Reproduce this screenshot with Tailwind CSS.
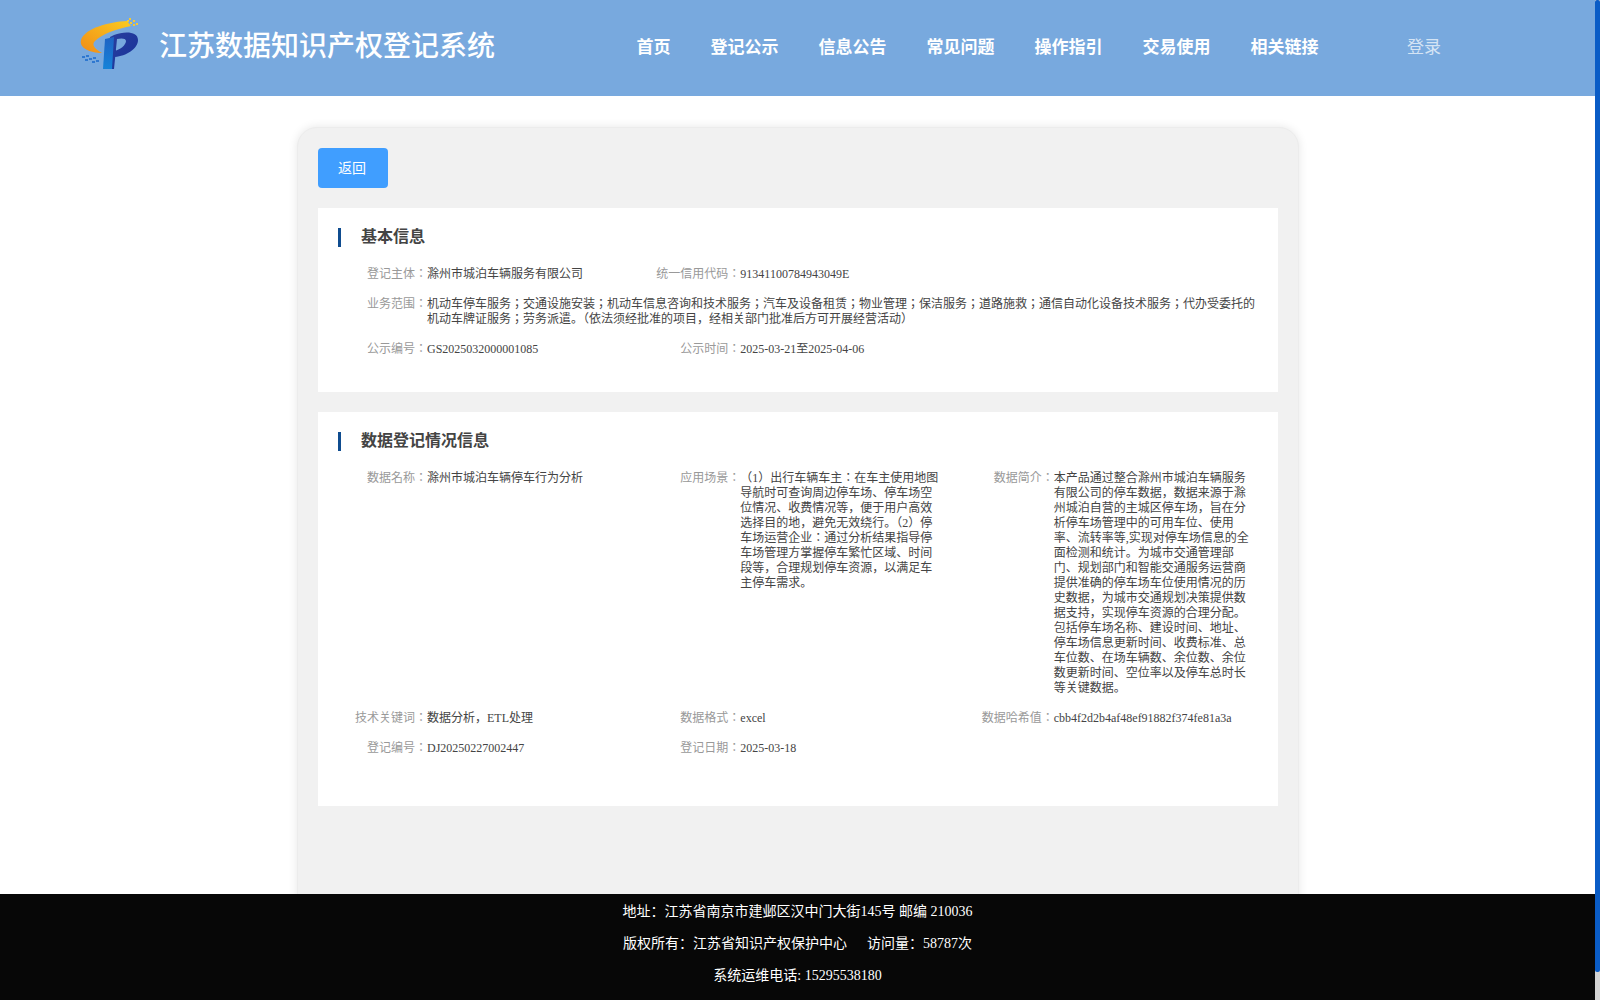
<!DOCTYPE html>
<html lang="zh-CN">
<head>
  <meta charset="UTF-8" />
  <title>江苏数据知识产权登记系统</title>
  <script src="https://cdn.jsdelivr.net/npm/@tailwindcss/browser@4"></script>
</head>
<body class="h-screen overflow-hidden flex bg-white font-['Liberation_Serif','Noto_Sans_CJK_SC',serif]">
  <div class="w-[1595px] h-full flex flex-col">
    <!-- Header -->
    <header class="h-[96px] shrink-0 bg-[#78a9de] flex items-center text-white">
      <svg class="ml-[76px] mb-[6px] w-[70px] h-[60px]" viewBox="0 0 70 60">
        <defs>
          <linearGradient id="swoosh" x1="0" y1="1" x2="1" y2="0">
            <stop offset="0" stop-color="#f08c17" />
            <stop offset="1" stop-color="#fbcb1f" />
          </linearGradient>
          <linearGradient id="stem" x1="0" y1="0" x2="0" y2="1">
            <stop offset="0" stop-color="#1e63c4" />
            <stop offset="1" stop-color="#1583d8" />
          </linearGradient>
          <linearGradient id="bowl" x1="0" y1="0" x2="1" y2="1">
            <stop offset="0" stop-color="#2a3f9e" />
            <stop offset="1" stop-color="#17329a" />
          </linearGradient>
        </defs>
        <path d="M51 6 C33 7 9 13 5 25 C3 33 14 38 26 38 C19 34 15 30 19 26 C26 19 40 14 55 11 Z" fill="url(#swoosh)" />
        <path d="M38 20 C48 16 62 16 62 25 C62 34 50 41 39 42 L38 36 C44 35 50 30 50 26 C50 23 45 23 41 24 L38 54 L31 54 L34 22 Z" fill="url(#bowl)" />
        <path d="M29 24 L38 22 L36 54 L27 54 Z" fill="url(#stem)" />
        <path d="M51 5h2v2h-2zM54 7h2v2h-2zM57 5h2v2h-2zM60 8h2v2h-2zM53 3h2v2h-2zM57 9h2v2h-2z" fill="#f5c832" />
        <path d="M6 41h3v2h-3zM10 40h3v2h-3zM9 44h3v2h-3zM13 43h3v2h-3zM17 42h3v2h-3zM16 46h3v2h-3zM20 45h3v2h-3z" fill="#2f78d0" />
      </svg>
      <h1 class="ml-[13px] mb-[2px] text-[28px] leading-none font-medium whitespace-nowrap">江苏数据知识产权登记系统</h1>
      <nav class="ml-[141.5px] flex gap-10 text-[17px] font-bold whitespace-nowrap">
        <a href="#">首页</a>
        <a href="#">登记公示</a>
        <a href="#">信息公告</a>
        <a href="#">常见问题</a>
        <a href="#">操作指引</a>
        <a href="#">交易使用</a>
        <a href="#">相关链接</a>
      </nav>
      <a href="#" class="ml-[88.5px] text-[17px] text-white/70">登录</a>
    </header>

    <!-- Main -->
    <main class="flex-1 overflow-hidden pt-[31px]">
      <div class="ml-[297px] w-[1002px] h-[900px] bg-[#f1f1f1] border border-[#ececec] rounded-[20px] shadow-[0_0_10px_rgba(0,0,0,0.1)] p-5">
        <button class="w-[70px] h-10 pt-px pr-[2px] bg-[#409eff] text-white text-sm rounded">返回</button>

        <section lang="ja" class="mt-5 h-[184px] bg-white pl-5 pt-5 text-xs leading-[15px] text-[#444] font-['Liberation_Serif','Noto_Sans_CJK_JP',serif]">
          <h2 class="h-[19px] mb-5 border-l-[3px] border-[#0f4c8f] pl-5 text-base leading-[18px] font-bold text-[#444]">基本信息</h2>
          <div class="grid grid-cols-3 mb-[15px]">
            <div class="flex">
              <span class="w-[89px] shrink-0 text-right text-[#999]">登记主体&#xFF1A;</span>
              <span>滁州市城泊车辆服务有限公司</span>
            </div>
            <div class="flex">
              <span class="w-[89px] shrink-0 text-right text-[#999]">统一信用代码&#xFF1A;</span>
              <span>91341100784943049E</span>
            </div>
          </div>
          <div class="flex mb-[15px]">
            <span class="w-[89px] shrink-0 text-right text-[#999]">业务范围&#xFF1A;</span>
            <span class="whitespace-nowrap">机动车停车服务&#xFF1B;交通设施安装&#xFF1B;机动车信息咨询和技术服务&#xFF1B;汽车及设备租赁&#xFF1B;物业管理&#xFF1B;保洁服务&#xFF1B;道路施救&#xFF1B;通信自动化设备技术服务&#xFF1B;代办受委托的<br />机动车牌证服务&#xFF1B;劳务派遣。&#xFF08;依法须经批准的项目&#xFF0C;经相关部门批准后方可开展经营活动&#xFF09;</span>
          </div>
          <div class="grid grid-cols-3">
            <div class="flex">
              <span class="w-[89px] shrink-0 text-right text-[#999]">公示编号&#xFF1A;</span>
              <span>GS2025032000001085</span>
            </div>
            <div class="flex">
              <span class="w-[89px] shrink-0 text-right text-[#999]">公示时间&#xFF1A;</span>
              <span>2025-03-21至2025-04-06</span>
            </div>
          </div>
        </section>

        <section lang="ja" class="mt-5 h-[394px] bg-white pl-5 pt-5 text-xs leading-[15px] text-[#444] font-['Liberation_Serif','Noto_Sans_CJK_JP',serif]">
          <h2 class="h-[19px] mb-5 border-l-[3px] border-[#0f4c8f] pl-5 text-base leading-[18px] font-bold text-[#444]">数据登记情况信息</h2>
          <div class="grid grid-cols-3 mb-[15px]">
            <div class="flex">
              <span class="w-[89px] shrink-0 text-right text-[#999]">数据名称&#xFF1A;</span>
              <span>滁州市城泊车辆停车行为分析</span>
            </div>
            <div class="flex">
              <span class="w-[89px] shrink-0 text-right text-[#999]">应用场景&#xFF1A;</span>
              <span class="whitespace-nowrap">&#xFF08;1&#xFF09;出行车辆车主&#xFF1A;在车主使用地图<br />导航时可查询周边停车场、停车场空<br />位情况、收费情况等&#xFF0C;便于用户高效<br />选择目的地&#xFF0C;避免无效绕行。&#xFF08;2&#xFF09;停<br />车场运营企业&#xFF1A;通过分析结果指导停<br />车场管理方掌握停车繁忙区域、时间<br />段等&#xFF0C;合理规划停车资源&#xFF0C;以满足车<br />主停车需求。</span>
            </div>
            <div class="flex">
              <span class="w-[89px] shrink-0 text-right text-[#999]">数据简介&#xFF1A;</span>
              <span class="whitespace-nowrap">本产品通过整合滁州市城泊车辆服务<br />有限公司的停车数据&#xFF0C;数据来源于滁<br />州城泊自营的主城区停车场&#xFF0C;旨在分<br />析停车场管理中的可用车位、使用<br />率、流转率等,实现对停车场信息的全<br />面检测和统计。为城市交通管理部<br />门、规划部门和智能交通服务运营商<br />提供准确的停车场车位使用情况的历<br />史数据&#xFF0C;为城市交通规划决策提供数<br />据支持&#xFF0C;实现停车资源的合理分配。<br />包括停车场名称、建设时间、地址、<br />停车场信息更新时间、收费标准、总<br />车位数、在场车辆数、余位数、余位<br />数更新时间、空位率以及停车总时长<br />等关键数据。</span>
            </div>
          </div>
          <div class="grid grid-cols-3 mb-[15px]">
            <div class="flex">
              <span class="w-[89px] shrink-0 text-right text-[#999]">技术关键词&#xFF1A;</span>
              <span>数据分析&#xFF0C;ETL处理</span>
            </div>
            <div class="flex">
              <span class="w-[89px] shrink-0 text-right text-[#999]">数据格式&#xFF1A;</span>
              <span>excel</span>
            </div>
            <div class="flex">
              <span class="w-[89px] shrink-0 text-right text-[#999]">数据哈希值&#xFF1A;</span>
              <span>cbb4f2d2b4af48ef91882f374fe81a3a</span>
            </div>
          </div>
          <div class="grid grid-cols-3">
            <div class="flex">
              <span class="w-[89px] shrink-0 text-right text-[#999]">登记编号&#xFF1A;</span>
              <span>DJ20250227002447</span>
            </div>
            <div class="flex">
              <span class="w-[89px] shrink-0 text-right text-[#999]">登记日期&#xFF1A;</span>
              <span>2025-03-18</span>
            </div>
          </div>
        </section>
      </div>
    </main>

    <!-- Footer -->
    <footer class="h-[106px] shrink-0 bg-[#070707] pt-[2px] text-center text-sm leading-8 text-white">
      <p>地址&#xFF1A;江苏省南京市建邺区汉中门大街145号 邮编 210036</p>
      <p>版权所有&#xFF1A;江苏省知识产权保护中心<span class="ml-5">访问量&#xFF1A;58787次</span></p>
      <p>系统运维电话: 15295538180</p>
    </footer>
  </div>

  <!-- Scrollbar -->
  <div class="w-[5px] h-full bg-[#d3d3d3]">
    <div class="h-[972px] bg-[#0a5cc6] rounded-[2px]"></div>
  </div>
</body>
</html>
